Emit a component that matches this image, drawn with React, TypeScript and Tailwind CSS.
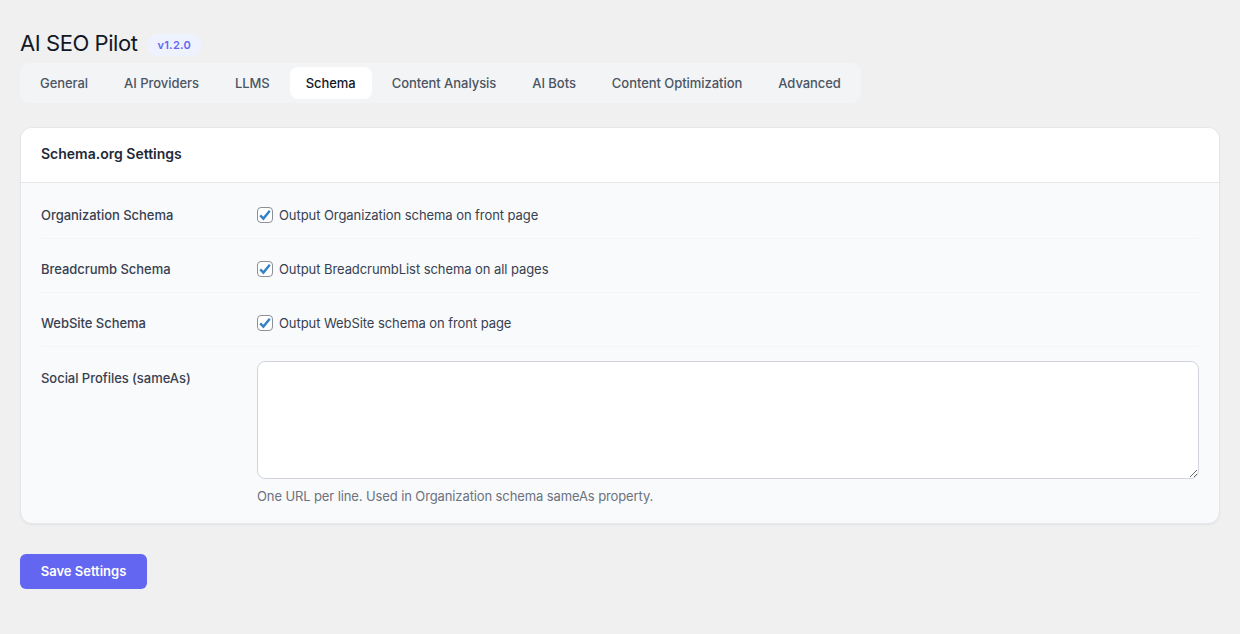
const tabs = ["General", "AI Providers", "LLMS", "Schema", "Content Analysis", "AI Bots", "Content Optimization", "Advanced"];

const checkRows = [
  { label: "Organization Schema", text: "Output Organization schema on front page" },
  { label: "Breadcrumb Schema", text: "Output BreadcrumbList schema on all pages" },
  { label: "WebSite Schema", text: "Output WebSite schema on front page" },
];

function Checkbox() {
  return (
    <span className="flex h-4 w-4 shrink-0 items-center justify-center rounded-[4px] border border-[#8c8f94] bg-white">
      <svg width="14" height="14" viewBox="0 0 14 14" fill="none">
        <path d="M2.2 7.4 L5.4 10.6 L11.8 2.8" stroke="#3582c4" strokeWidth="2.4" />
      </svg>
    </span>
  );
}

export default function App() {
  return (
    <div className="min-h-[634px] bg-[#f0f0f1] px-5 pt-[30px] font-['Inter',sans-serif] text-[13px] text-[#374151]">
      {/* Title */}
      <div className="flex h-[29px] items-center gap-2.5">
        <h1 className="pb-0.5 text-[22px] font-normal leading-[27px] tracking-[-0.44px] text-[#111827]">AI SEO Pilot</h1>
        <span className="rounded-full bg-[#eef2ff] px-2.5 py-[3px] text-[11px] font-semibold leading-[16px] tracking-[0.28px] text-[#6366f1]">v1.2.0</span>
      </div>

      {/* Tabs */}
      <div className="mt-1 flex w-fit gap-1 rounded-[10px] bg-[#f3f4f6] p-1">
        {tabs.map((t) => (
          <div
            key={t}
            className={
              t === "Schema"
                ? "rounded-lg bg-white px-4 py-2 text-[13px] font-medium leading-4 tracking-[-0.05px] text-[#111827]"
                : "rounded-lg px-4 py-2 text-[13px] font-medium leading-4 tracking-[-0.05px] text-[#4b5563]"
            }
          >
            {t}
          </div>
        ))}
      </div>

      {/* Card */}
      <div className="mt-6 overflow-hidden rounded-xl border border-[#e5e7eb] bg-[#f9fafb] shadow-xs">
        <div className="flex h-[55px] items-center border-b border-[#e5e7eb] bg-white px-5 pb-[2px]">
          <h2 className="text-sm font-semibold text-[#1f2937]">Schema.org Settings</h2>
        </div>
        <div className="px-5 pt-[2px] pb-[18px]">
          {checkRows.map((r) => (
            <div key={r.label} className="flex h-[54px] items-center border-b border-[#f3f4f6] pt-1.5">
              <div className="w-[216px] font-medium leading-5 tracking-[-0.04px] text-[#374151]">{r.label}</div>
              <div className="flex items-center gap-1.5">
                <Checkbox />
                <span className="leading-5 tracking-[-0.07px]">{r.text}</span>
              </div>
            </div>
          ))}
          <div className="flex pt-3.5">
            <div className="w-[216px] pt-[7px] font-medium leading-5 tracking-[-0.04px] text-[#374151]">Social Profiles (sameAs)</div>
            <div className="flex-1">
              <textarea className="block h-[118px] w-full rounded-lg border border-[#d1d5db] bg-white" />
              <p className="mt-2 text-[13px] leading-[18px] tracking-[-0.11px] text-[#6b7280]">One URL per line. Used in Organization schema sameAs property.</p>
            </div>
          </div>
        </div>
      </div>

      {/* Save */}
      <button className="mt-[30px] flex h-[35px] w-[127px] items-center justify-center rounded-md bg-[#6366f1] text-[13px] font-semibold text-white">
        Save Settings
      </button>
    </div>
  );
}
